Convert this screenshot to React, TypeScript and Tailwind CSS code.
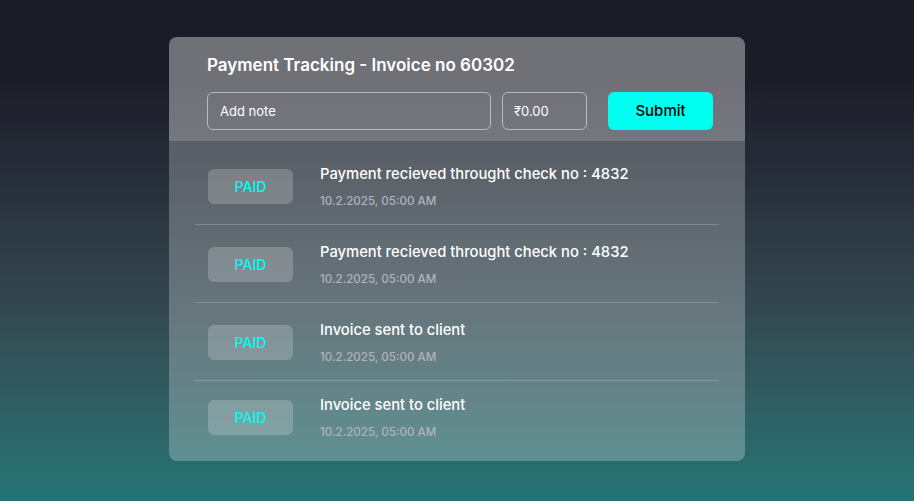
const rows = [
  { title: "Payment recieved throught check no : 4832", date: "10.2.2025, 05:00 AM" },
  { title: "Payment recieved throught check no : 4832", date: "10.2.2025, 05:00 AM" },
  { title: "Invoice sent to client", date: "10.2.2025, 05:00 AM" },
  { title: "Invoice sent to client", date: "10.2.2025, 05:00 AM" },
];

export default function App() {
  return (
    <div
      className="min-h-screen flex justify-center pt-[37px] bg-gradient-to-b from-[#1c1c28] from-15% via-[#33464f] via-60% to-[#227575]"
      style={{ fontFamily: "Inter, 'Noto Sans', sans-serif" }}
    >
      <div className="w-[576px] h-[424px] rounded-lg overflow-hidden bg-white/25 flex flex-col">
        {/* Header */}
        <div className="bg-white/[0.16] pl-[38px] pr-[32px] pt-[16px] pb-[11px]">
          <h1 className="text-[17px] leading-6 font-semibold text-white">
            Payment Tracking - Invoice no 60302
          </h1>
          <div className="flex items-center mt-[15px]">
            <input
              placeholder="Add note"
              className="w-[284px] h-[38px] rounded-md border border-white/50 bg-transparent px-[12px] text-[13px] text-white placeholder:text-white outline-none"
            />
            <input
              placeholder="₹0.00"
              className="w-[85px] h-[38px] ml-[11px] rounded-md border border-white/50 bg-transparent px-[11px] text-[13px] text-white placeholder:text-white outline-none"
            />
            <button className="w-[105px] h-[38px] ml-[21px] rounded-md bg-[#00fff0] text-black text-[15px] font-medium">
              Submit
            </button>
          </div>
        </div>

        {/* Entries */}
        <div className="px-[26px] pt-[6px] flex flex-col">
          {rows.map((r, i) => {
            const last = i === rows.length - 1;
            return (
              <div
                key={i}
                className={
                  "flex items-center " +
                  (last ? "h-[72px]" : "h-[78px] pt-[2px] border-b border-white/20")
                }
              >
                <div className="ml-[13px] w-[85px] h-[35px] rounded-md bg-white/20 flex items-center justify-center text-[14px] font-medium text-[#00fff0]">
                  PAID
                </div>
                <div className="ml-[27px] flex flex-col">
                  <span className="text-[14.75px] leading-5 font-medium text-white">{r.title}</span>
                  <span className="mt-[9px] text-[11.6px] leading-4 font-medium text-[#b0b4ba]">{r.date}</span>
                </div>
              </div>
            );
          })}
        </div>
      </div>
    </div>
  );
}
